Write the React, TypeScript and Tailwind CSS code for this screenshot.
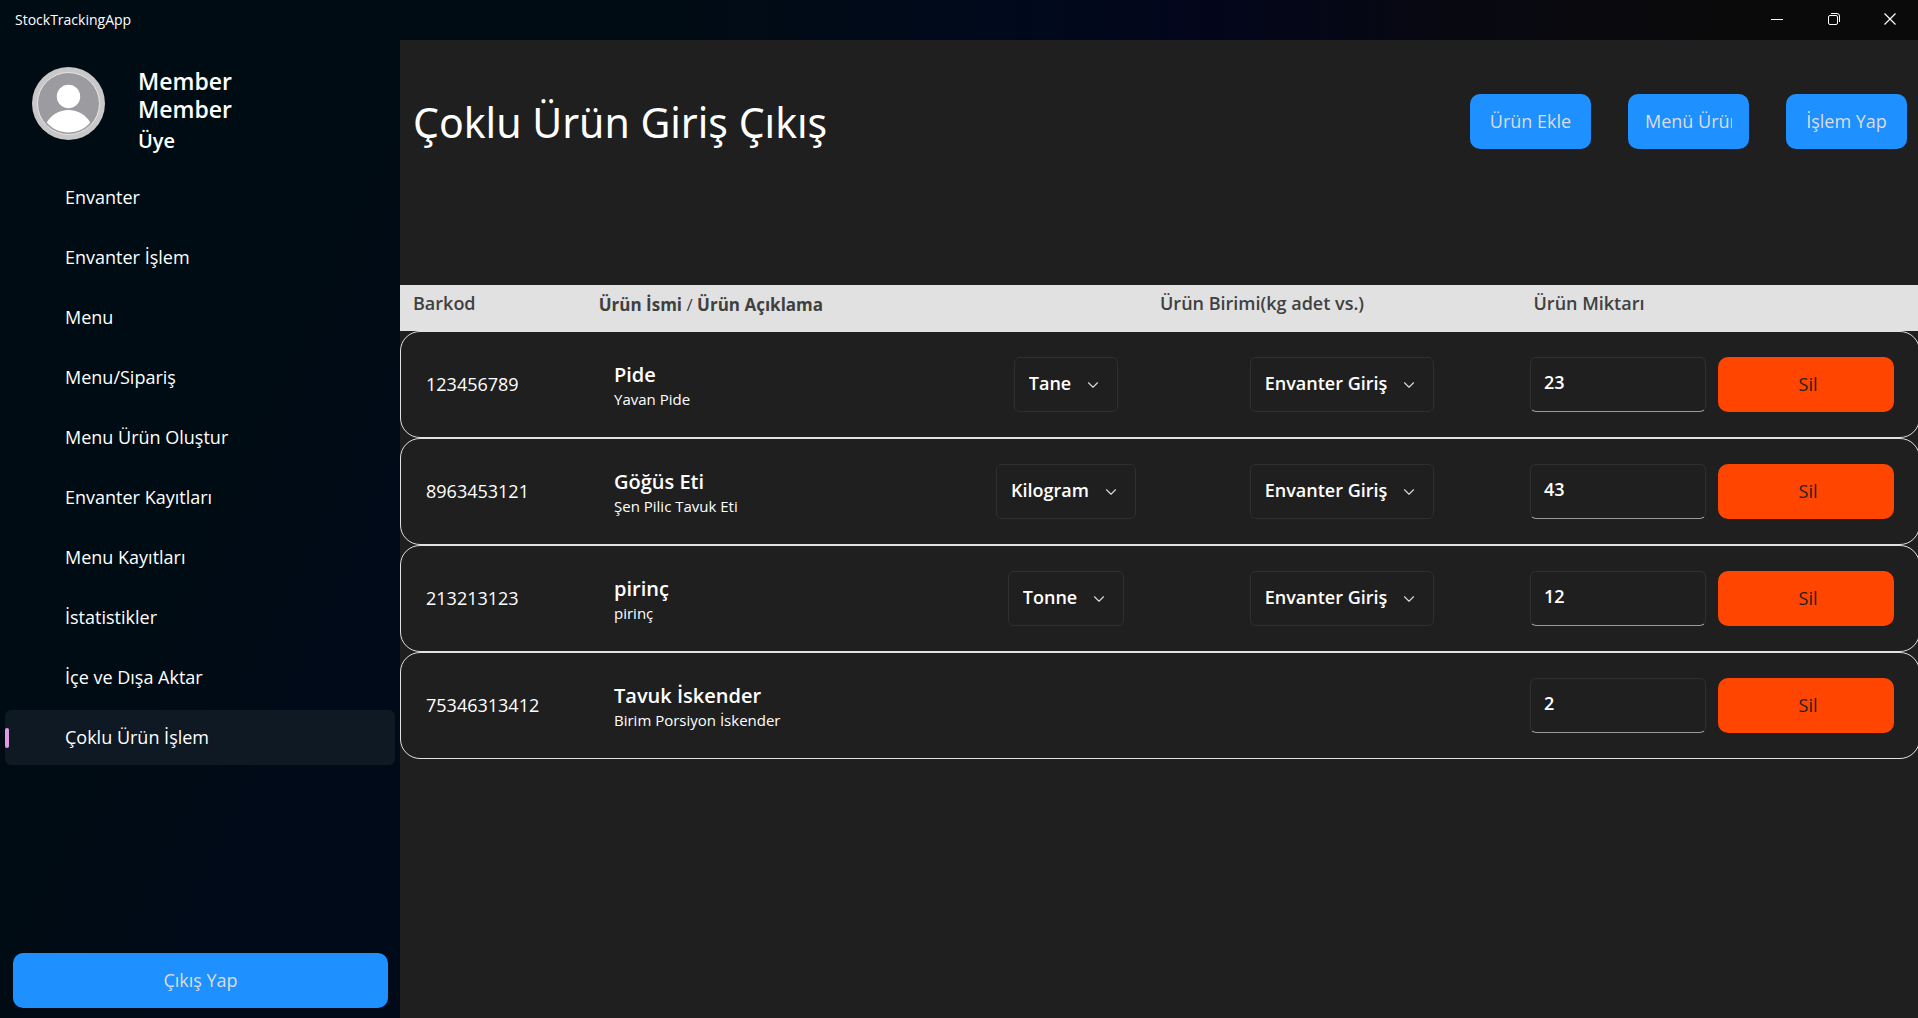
import React from "react";
import { ChevronDown } from "lucide-react";

type Row = {
  barcode: string;
  name: string;
  description: string;
  unit?: string;
  amount: string;
};

const navItems = [
  "Envanter",
  "Envanter İşlem",
  "Menu",
  "Menu/Sipariş",
  "Menu Ürün Oluştur",
  "Envanter Kayıtları",
  "Menu Kayıtları",
  "İstatistikler",
  "İçe ve Dışa Aktar",
  "Çoklu Ürün İşlem",
];

const activeItem = "Çoklu Ürün İşlem";

const rows: Row[] = [
  { barcode: "123456789", name: "Pide", description: "Yavan Pide", unit: "Tane", amount: "23" },
  { barcode: "8963453121", name: "Göğüs Eti", description: "Şen Pilic Tavuk Eti", unit: "Kilogram", amount: "43" },
  { barcode: "213213123", name: "pirinç", description: "pirinç", unit: "Tonne", amount: "12" },
  { barcode: "75346313412", name: "Tavuk İskender", description: "Birim Porsiyon İskender", amount: "2" },
];

function TitleBar() {
  return (
    <header className="flex h-10 shrink-0 items-center justify-between bg-[linear-gradient(90deg,#000c14_0%,#000c14_35%,#000a1c_52%,#03061c_62%,#080812_75%,#0a0a0c_88%,#0a0a0a_100%)] pl-[15px]">
      <span className="text-sm">StockTrackingApp</span>
      <div className="flex h-full pb-0.5">
        <button type="button" aria-label="Simge durumuna küçült" className="flex w-[57px] items-center justify-center">
          <svg width="12" height="12" viewBox="0 0 12 12" fill="none" stroke="white">
            <path d="M0 6.5h12" />
          </svg>
        </button>
        <button type="button" aria-label="Önceki boyut" className="flex w-[57px] items-center justify-center">
          <svg width="12" height="12" viewBox="0 0 12 12" fill="none" stroke="white">
            <rect x="0.5" y="2.5" width="9" height="9" rx="1.5" />
            <path d="M3 0.5h6a2.5 2.5 0 0 1 2.5 2.5v6" />
          </svg>
        </button>
        <button type="button" aria-label="Kapat" className="flex w-14 items-center justify-center">
          <svg width="12" height="12" viewBox="0 0 12 12" fill="none" stroke="white" strokeWidth="1.2">
            <path d="M0.5 0.5l11 11M11.5 0.5l-11 11" />
          </svg>
        </button>
      </div>
    </header>
  );
}

function Avatar() {
  return (
    <svg width="73" height="73" viewBox="0 0 73 73" className="shrink-0" role="img" aria-label="Profil">
      <circle cx="36.5" cy="36.5" r="36.5" fill="#c8c8c8" />
      <circle cx="36.5" cy="36.5" r="31" fill="#9c9ca0" stroke="#e8e8e8" />
      <circle cx="36.5" cy="29.5" r="11.7" fill="white" />
      <path d="M14.8 55.5C19 48 27 43 36.5 43S54 48 58.2 55.5C53 62 45 65.5 36.5 65.5S20 62 14.8 55.5Z" fill="white" />
    </svg>
  );
}

function Sidebar() {
  return (
    <aside className="flex w-[400px] shrink-0 flex-col bg-[linear-gradient(115deg,#000c14_0%,#000c14_50%,#000a19_75%,#000a19_100%)]">
      <div className="flex gap-[33px] pt-[27px] pl-8">
        <Avatar />
        <div className="w-28 font-semibold">
          <p className="text-[23px] leading-7">Member Member</p>
          <p className="mt-1 text-xl leading-7">Üye</p>
        </div>
      </div>
      <nav className="mt-[15px] flex flex-col gap-[5px] px-[5px]">
        {navItems.map((item) => (
          <a
            key={item}
            href="#"
            aria-current={item === activeItem ? "page" : undefined}
            className={
              item === activeItem
                ? "flex h-[55px] items-center rounded-md bg-[#0f1923]"
                : "flex h-[55px] items-center rounded-md"
            }
          >
            <span className={item === activeItem ? "h-5 w-1 rounded-full bg-[#dd9ce4]" : "h-5 w-1"} />
            <span className="pb-0.5 pl-14 text-lg">{item}</span>
          </a>
        ))}
      </nav>
      <button
        type="button"
        className="mt-auto mr-3 mb-2.5 ml-[13px] h-[55px] rounded-[10px] bg-[#1e90ff] pb-0.5 text-lg text-[#dcdcdc]"
      >
        Çıkış Yap
      </button>
    </aside>
  );
}

function ActionButton({ label }: { label: string }) {
  return (
    <button type="button" className="h-[55px] w-[121px] rounded-[10px] bg-[#1e90ff] px-[17px] pb-0.5 text-lg text-[#dcdcdc]">
      <span className="block overflow-hidden whitespace-nowrap">{label}</span>
    </button>
  );
}

function Picker({ label, value, options }: { label: string; value: string; options: string[] }) {
  return (
    <div className="relative">
      <select
        aria-label={label}
        defaultValue={value}
        className="field-sizing-content h-[55px] appearance-none rounded-md border border-[#303030] bg-[#1f1f1f] pr-[46px] pb-1 pl-3.5 text-lg font-semibold"
      >
        {options.map((o) => (
          <option key={o}>{o}</option>
        ))}
      </select>
      <ChevronDown className="pointer-events-none absolute top-[19px] right-4 size-[18px] text-[#d8d8d8]" strokeWidth={1.5} />
    </div>
  );
}

function ProductTable() {
  return (
    <table className="block w-full">
      <thead className="block bg-[#e1e1e1] text-[#404040]">
        <tr className="grid h-[46px] grid-cols-[186fr_562fr_374fr_385fr] pt-1.5 pl-[13px] text-left text-lg leading-6">
          <th className="font-semibold">Barkod</th>
          <th className="text-[17px] leading-7 font-bold">
            Ürün İsmi <span className="font-normal">/</span> Ürün Açıklama
          </th>
          <th className="font-semibold">Ürün Birimi(kg adet vs.)</th>
          <th className="font-semibold">Ürün Miktarı</th>
        </tr>
      </thead>
      <tbody className="block">
        {rows.map((r) => (
          <tr
            key={r.barcode}
            className="-mr-0.5 grid h-[107px] grid-cols-[188fr_314fr_276fr_276fr_226fr_188fr] items-center rounded-[20px] border border-[#e1e1e1] px-[25px]"
          >
            <td className="pb-0.5 text-lg">{r.barcode}</td>
            <td>
              <p className="text-xl leading-7 font-semibold">{r.name}</p>
              <p className="text-[15px] leading-5">{r.description}</p>
            </td>
            <td className="flex justify-center">
              {r.unit && <Picker label="Ürün Birimi" value={r.unit} options={["Tane", "Kilogram", "Tonne"]} />}
            </td>
            <td className="flex justify-center">
              {r.unit && <Picker label="İşlem" value="Envanter Giriş" options={["Envanter Giriş", "Envanter Çıkış"]} />}
            </td>
            <td className="flex justify-end">
              <input
                aria-label="Ürün Miktarı"
                defaultValue={r.amount}
                className="h-[55px] w-44 rounded-md border border-[#303030] border-b-[#9a9a9a] bg-transparent px-[13px] pb-1.5 text-lg font-semibold"
              />
            </td>
            <td className="pl-3">
              <button
                type="button"
                className="h-[55px] w-full rounded-[10px] bg-[#ff4500] pb-0.5 pl-1 text-lg text-[#222222]"
              >
                Sil
              </button>
            </td>
          </tr>
        ))}
      </tbody>
    </table>
  );
}

export default function App() {
  return (
    <div className="flex min-h-screen flex-col overflow-hidden bg-[#1f1f1f] font-['Open_Sans',sans-serif] text-white">
      <TitleBar />
      <div className="flex flex-1">
        <Sidebar />
        <main className="min-w-0 flex-1">
          <div className="flex h-[245px] items-start justify-between pt-[54px] pr-[11px] pl-[13px]">
            <h1 className="font-['Noto_Sans',sans-serif] text-[41px] leading-[56px]">Çoklu Ürün Giriş Çıkış</h1>
            <div className="flex gap-[37px]">
              <ActionButton label="Ürün Ekle" />
              <ActionButton label="Menü Ürün" />
              <ActionButton label="İşlem Yap" />
            </div>
          </div>
          <ProductTable />
        </main>
      </div>
    </div>
  );
}
